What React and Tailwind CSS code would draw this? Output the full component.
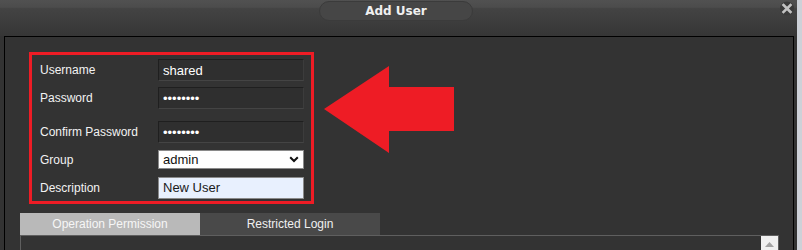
import React from 'react';

const FormRow = ({ label, className, children }) => (
  <div className={`flex items-center ${className}`}>
    <div className="w-[118px] text-[12px] text-[#f2f2f2]">{label}</div>
    {children}
  </div>
);

const DarkInput = ({ value, type = 'text' }) => (
  <input
    type={type}
    readOnly
    defaultValue={value}
    className="w-[146px] h-[22px] px-[4px] bg-[#2f2f2f] border border-[#1f1f1f] border-b-[#444444] border-r-[#3c3c3c] text-[13px] text-white outline-none font-['Liberation_Sans',Arial,sans-serif]"
  />
);

export default function App() {
  return (
    <div className="flex w-[802px] h-[250px] overflow-hidden font-['Liberation_Sans',Arial,sans-serif]">
      <div className="w-[797px] h-full bg-[#333333] flex flex-col">
        {/* Title bar */}
        <div className="relative h-[36px] shrink-0 bg-[linear-gradient(to_bottom,#515151_0%,#4c4c4c_20%,#434343_24%,#363636_100%)]">
          <div className="ml-[319px] mt-[1px] w-[154px] h-[20px] rounded-full bg-[#464646] border border-[#3b3b3b] flex items-center justify-center">
            <span className="text-[12px] font-bold text-[#f0f0f0] font-['DejaVu_Sans',Verdana,sans-serif]">Add User</span>
          </div>
          <svg className="absolute left-[779px] top-[1px]" width="16" height="15" viewBox="0 0 16 15">
            <circle cx="8" cy="7.5" r="7" fill="#3a3a3a" />
            <path d="M4.5 4 L11.5 11 M11.5 4 L4.5 11" stroke="#c2c2c2" strokeWidth="2.6" strokeLinecap="square" />
          </svg>
        </div>

        {/* Panel */}
        <div className="ml-[4px] w-[790px] flex-1 border border-black border-b-0">
          <div className="flex items-start">
            <div className="ml-[24px] mt-[15px] w-[285px] border-[3px] border-[#ee1c25] pl-[8px] pt-[4px] pb-[2px]">
              <FormRow label="Username">
                <DarkInput value="shared" />
              </FormRow>
              <FormRow label="Password" className="mt-[6px]">
                <DarkInput value="shared12" type="password" />
              </FormRow>
              <FormRow label="Confirm Password" className="mt-[12px]">
                <DarkInput value="shared12" type="password" />
              </FormRow>
              <FormRow label="Group" className="mt-[7px]">
                <div className="w-[146px] h-[19px] bg-white border border-[#8a8a8a] flex items-center justify-between pl-[4px] pr-[4px]">
                  <span className="text-[13px] text-[#111]">admin</span>
                  <svg width="10" height="7" viewBox="0 0 10 7">
                    <path d="M1.2 1.2 L5 5 L8.8 1.2" fill="none" stroke="#111" strokeWidth="2" />
                  </svg>
                </div>
              </FormRow>
              <FormRow label="Description" className="mt-[8px]">
                <div className="w-[146px] h-[22px] bg-[#e8f0fe] border border-[#8a8a8a] flex items-center pl-[4px]">
                  <span className="text-[13px] text-[#1a1a1a]">New User</span>
                </div>
              </FormRow>
            </div>
            <svg className="ml-[10px] mt-[29px]" width="130" height="87" viewBox="0 0 130 87">
              <polygon points="0,43 65,0 65,21 130,21 130,65 65,65 65,87" fill="#ee1c25" />
            </svg>
          </div>

          {/* Tabs */}
          <div className="ml-[15px] mt-[9px] flex">
            <div className="w-[180px] h-[22px] bg-[#b9b9b9] flex items-center justify-center text-[12px] text-[#f6f6f6]">
              Operation Permission
            </div>
            <div className="w-[180px] h-[22px] bg-[#494949] flex items-center justify-center text-[12px] text-[#f0f0f0]">
              Restricted Login
            </div>
          </div>
          <div className="ml-[15px] w-[759px] h-[40px] border-t border-l border-r border-[#5f5f5f] flex justify-end">
            <div className="w-[17px] h-full bg-[#f0f0f0] flex justify-center pt-[6px]">
              <svg width="9" height="5" viewBox="0 0 9 5">
                <polygon points="0,5 4.5,0 9,5" fill="#a3a3a3" />
              </svg>
            </div>
          </div>
        </div>
      </div>
      <div className="flex-1 bg-[#cdd1d8]" />
    </div>
  );
}
